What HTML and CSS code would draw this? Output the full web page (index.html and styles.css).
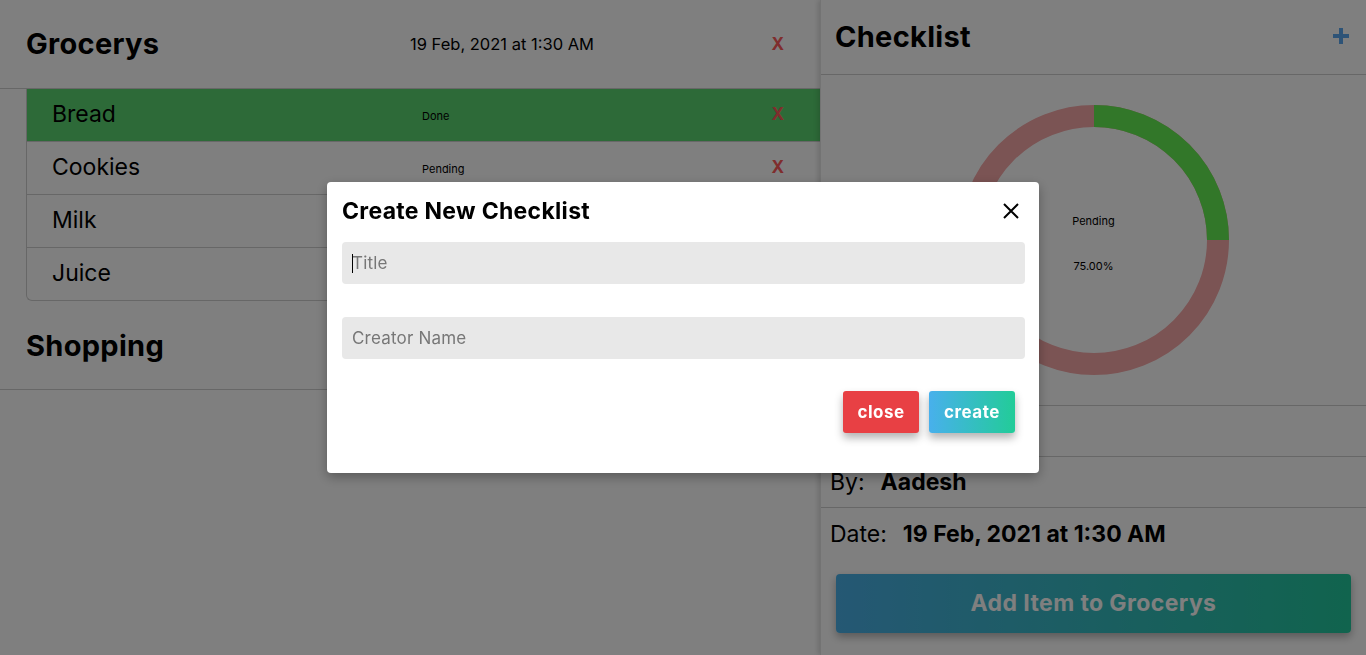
FILE: index.html
```html
<!DOCTYPE html>
<html>
<head>
<meta charset="utf-8">
<link rel="stylesheet" href="styles.css">
</head>
<body>
<div class="app">
  <section class="lists">
    <div class="group-head">
      <h2 class="group-title">Grocerys</h2>
      <span class="group-date">19 Feb, 2021 at 1:30 AM</span>
      <span class="del">X</span>
    </div>
    <div class="items">
      <div class="item done"><span class="item-name">Bread</span><span class="item-status">Done</span><span class="del">X</span></div>
      <div class="item"><span class="item-name">Cookies</span><span class="item-status">Pending</span><span class="del">X</span></div>
      <div class="item"><span class="item-name">Milk</span><span class="item-status">Pending</span><span class="del">X</span></div>
      <div class="item last"><span class="item-name">Juice</span><span class="item-status">Pending</span><span class="del">X</span></div>
    </div>
    <div class="group-head shopping">
      <h2 class="group-title">Shopping</h2>
    </div>
  </section>
  <aside class="detail">
    <div class="detail-head">
      <h2 class="detail-title">Checklist</h2>
      <svg class="plus" width="18" height="18" viewBox="0 0 18 18"><path d="M9 1v16M1 9h16" stroke="currentColor" stroke-width="4"/></svg>
    </div>
    <div class="chart">
      <svg width="270" height="270" viewBox="0 0 270 270">
        <circle cx="135" cy="135" r="124" fill="none" stroke="#f6a8a8" stroke-width="22"/>
        <path d="M135 11 A124 124 0 0 1 259 135" fill="none" stroke="#64ee52" stroke-width="22"/>
      </svg>
      <div class="chart-labels">
        <span>Pending</span>
        <span>75.00%</span>
      </div>
    </div>
    <div class="info-row"></div>
    <div class="info-row"><span class="info-label">By:</span><span class="info-value">Aadesh</span></div>
    <div class="info-row noborder"><span class="info-label">Date:</span><span class="info-value">19 Feb, 2021 at 1:30 AM</span></div>
    <button class="add-btn">Add Item to Grocerys</button>
  </aside>
</div>
<div class="backdrop">
  <div class="modal">
    <div class="modal-head">
      <h3 class="modal-title">Create New Checklist</h3>
      <svg class="modal-x" width="18" height="18" viewBox="0 0 18 18"><path d="M2 2L16 16M16 2L2 16" stroke="#000" stroke-width="2"/></svg>
    </div>
    <div class="field-wrap">
      <span class="caret"></span>
      <input class="field" type="text" placeholder="Title">
    </div>
    <input class="field" type="text" placeholder="Creator Name">
    <div class="modal-actions">
      <button class="btn btn-close">close</button>
      <button class="btn btn-create">create</button>
    </div>
  </div>
</div>
</body>
</html>
```
FILE: styles.css
```css
* { box-sizing: border-box; }
html, body { margin: 0; padding: 0; }
body {
  font-family: "Inter", "Lato", sans-serif;
  color: #000;
  background: #fff;
  width: 1366px;
  height: 655px;
  overflow: hidden;
}
.app {
  display: flex;
  height: 655px;
}
.lists {
  width: 820px;
  flex: none;
}
.group-head {
  height: 89px;
  display: grid;
  grid-template-columns: 384px 1fr auto;
  align-items: center;
  padding: 0 36px 1px 26px;
  border-bottom: 1px solid #cfcfcf;
}
.group-head.shopping { padding-bottom: 0; }
.group-title {
  margin: 0;
  font-size: 29px;
  font-weight: 700;
  letter-spacing: 0.3px;
}
.group-date {
  font-size: 16.5px;
}
.del {
  color: #ff5a5a;
  font-weight: 700;
  font-size: 17px;
}
.items {
  margin-left: 26px;
  border-left: 1px solid #cfcfcf;
  border-bottom: 1px solid #cfcfcf;
  border-bottom-left-radius: 6px;
  overflow: hidden;
}
.item {
  height: 53px;
  display: grid;
  grid-template-columns: 370px 1fr auto;
  align-items: center;
  padding: 0 36px 2px 25px;
  border-bottom: 1px solid #cfcfcf;
}
.item.last { border-bottom: none; height: 52px; }
.item.done { background: #5ad470; }
.item-name { font-size: 23px; }
.item-status { font-size: 11px; padding-top: 4px; }
.detail {
  flex: 1;
  box-shadow: -2px 0 5px rgba(0,0,0,0.15);
  border-left: 1px solid #e6e6e6;
  display: flex;
  flex-direction: column;
}
.detail-head {
  height: 75px;
  display: flex;
  align-items: center;
  justify-content: space-between;
  padding: 0 16px 1px 14px;
  border-bottom: 1px solid #cfcfcf;
}
.detail-title {
  margin: 0;
  font-size: 29px;
  font-weight: 700;
  letter-spacing: 0.3px;
}
.plus { color: #5aa6ee; margin-top: -2px; }
.chart {
  height: 331px;
  display: flex;
  align-items: center;
  justify-content: center;
  position: relative;
  border-bottom: 1px solid #cfcfcf;
}
.chart-labels {
  position: absolute;
  left: 0; right: 0; top: 139px;
  display: flex;
  flex-direction: column;
  align-items: center;
  gap: 31px;
  font-size: 11px;
}
.info-row {
  height: 51px;
  display: flex;
  align-items: center;
  gap: 16px;
  padding-left: 9px;
  padding-bottom: 1px;
  border-bottom: 1px solid #cfcfcf;
  font-size: 23px;
}
.info-row.noborder { border-bottom: none; padding-bottom: 0; }
.info-value { font-weight: 700; }
.add-btn {
  margin: 15px 15px 0;
  height: 59px;
  border: none;
  border-radius: 4px;
  background: linear-gradient(90deg, #4ab0e8, #22c89c);
  color: #fff;
  font-family: inherit;
  font-size: 23px;
  font-weight: 700;
  letter-spacing: 0.4px;
  padding-bottom: 2px;
  box-shadow: 0 4px 8px rgba(0,0,0,0.3);
}
.backdrop {
  position: fixed;
  inset: 0;
  background: rgba(0,0,0,0.5);
  display: flex;
  align-items: center;
  justify-content: center;
}
.modal {
  width: 712px;
  height: 291px;
  background: #fff;
  border-radius: 4px;
  padding: 15px 14px 0 15px;
  box-shadow: 0 4px 12px rgba(0,0,0,0.3);
  display: flex;
  flex-direction: column;
}
.modal-head {
  display: flex;
  align-items: center;
  justify-content: space-between;
  height: 28px;
  margin-bottom: 17px;
  padding-right: 5px;
}
.modal-title {
  margin: 0;
  font-size: 23px;
  font-weight: 700;
  letter-spacing: 0.3px;
}
.field-wrap {
  position: relative;
  display: flex;
  flex-direction: column;
}
.caret {
  position: absolute;
  left: 10px;
  top: 12px;
  width: 1px;
  height: 19px;
  background: #000;
}
.field {
  height: 42px;
  border: none;
  border-radius: 4px;
  background: #e8e8e8;
  padding: 0 10px;
  font-family: inherit;
  font-size: 17px;
  letter-spacing: 0.2px;
  outline: none;
  margin-bottom: 33px;
}
.field::placeholder { color: #777; }
.modal-actions {
  display: flex;
  justify-content: flex-end;
  gap: 10px;
  padding-right: 10px;
  margin-top: -1px;
}
.btn {
  height: 42px;
  border: none;
  border-radius: 3px;
  color: #fff;
  font-family: inherit;
  font-size: 17px;
  font-weight: 700;
  letter-spacing: 0.5px;
  box-shadow: 0 5px 8px rgba(0,0,0,0.3);
}
.btn-close { width: 76px; background: #e84044; }
.btn-create { width: 86px; background: linear-gradient(90deg, #48b0ec, #22cc98); }
```
